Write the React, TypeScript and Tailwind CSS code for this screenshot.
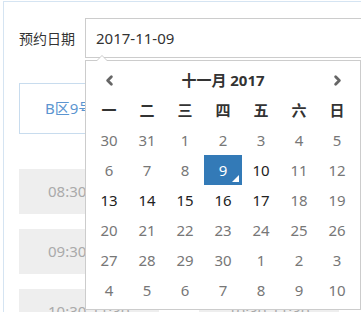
import { ChevronLeft, ChevronRight } from "lucide-react";

type Day = { d: number; tone: "muted" | "dark" | "active" };

const WEEK = ["一", "二", "三", "四", "五", "六", "日"];

const m = (d: number): Day => ({ d, tone: "muted" });
const k = (d: number): Day => ({ d, tone: "dark" });

const ROWS: Day[][] = [
  [m(30), m(31), m(1), m(2), m(3), m(4), m(5)],
  [m(6), m(7), m(8), { d: 9, tone: "active" }, k(10), m(11), m(12)],
  [k(13), k(14), k(15), k(16), k(17), m(18), m(19)],
  [m(20), m(21), m(22), m(23), m(24), m(25), m(26)],
  [m(27), m(28), m(29), m(30), m(1), m(2), m(3)],
  [m(4), m(5), m(6), m(7), m(8), m(9), m(10)],
];

const SLOTS = ["08:30-09:30", "09:30-10:30", "10:30-11:30"];

export default function App() {
  return (
    <div className="relative w-[361px] h-[312px] overflow-hidden bg-white pt-[1px] font-['Noto_Sans','Noto_Sans_CJK_SC',sans-serif]">
      <div className="ml-[3px] h-[400px] w-[500px] border-l border-t border-[#d5e4f2] pl-[15px] pt-[16px]">
        {/* date field */}
        <div className="flex items-center">
          <span className="w-[66px] shrink-0 whitespace-nowrap text-[14px] text-[#333]">预约日期</span>
          <div className="flex h-[40px] w-[300px] shrink-0 items-center border border-[#ccc] pl-[10px] text-[15px] text-[#333]">
            2017-11-09
          </div>
        </div>

        {/* court */}
        <div className="mt-[25px] flex h-[51px] w-[300px] items-center whitespace-nowrap border border-[#c8dcee] pl-[25px] text-[15px] text-[#5b95d0]">
          B区9号场地
        </div>

        {/* time slots */}
        <div className="mt-[35px] flex flex-col gap-[15px]">
          {SLOTS.map((s) => (
            <div key={s} className="flex gap-[40px]">
              <div className="flex h-[45px] w-[140px] items-center whitespace-nowrap bg-[#eee] pl-[29px] text-[15px] text-[#aaa]">
                {s}
              </div>
              <div className="flex h-[45px] w-[140px] items-center whitespace-nowrap bg-[#eee] pl-[29px] text-[15px] text-[#aaa]">
                {s}
              </div>
            </div>
          ))}
        </div>
      </div>

      {/* datepicker dropdown */}
      <div className="absolute left-[85px] top-[60px] w-[276px] border border-[#ccc] bg-white p-[4px] text-[15px] leading-none">
        <div className="absolute -top-[6px] left-[10px] h-0 w-0 border-x-[6px] border-b-[6px] border-x-transparent border-b-[#ccc]" />
        <div className="absolute -top-[5px] left-[11px] h-0 w-0 border-x-[5px] border-b-[5px] border-x-transparent border-b-white" />

        <div className="flex h-[30px] items-center">
          <div className="flex w-[38px] justify-center text-[#666]">
            <ChevronLeft size={15} strokeWidth={4.5} />
          </div>
          <div className="flex-1 text-center font-bold text-[#333]">十一月 2017</div>
          <div className="flex w-[38px] justify-center text-[#666]">
            <ChevronRight size={15} strokeWidth={4.5} />
          </div>
        </div>

        <div className="grid h-[30px] grid-cols-7 items-center">
          {WEEK.map((w) => (
            <div key={w} className="text-center font-bold text-[#333]">
              {w}
            </div>
          ))}
        </div>

        {ROWS.map((row, i) => (
          <div key={i} className="grid grid-cols-7">
            {row.map((day, j) => (
              <div
                key={j}
                className={`relative flex h-[30px] items-center justify-center ${
                  day.tone === "active"
                    ? "bg-[#337ab7] text-white"
                    : day.tone === "dark"
                    ? "text-[#222]"
                    : "text-[#777]"
                }`}
              >
                {day.d}
                {day.tone === "active" && (
                  <span className="absolute bottom-[3px] right-[3px] h-0 w-0 border-b-[7px] border-l-[7px] border-b-white border-l-transparent" />
                )}
              </div>
            ))}
          </div>
        ))}
      </div>
    </div>
  );
}
